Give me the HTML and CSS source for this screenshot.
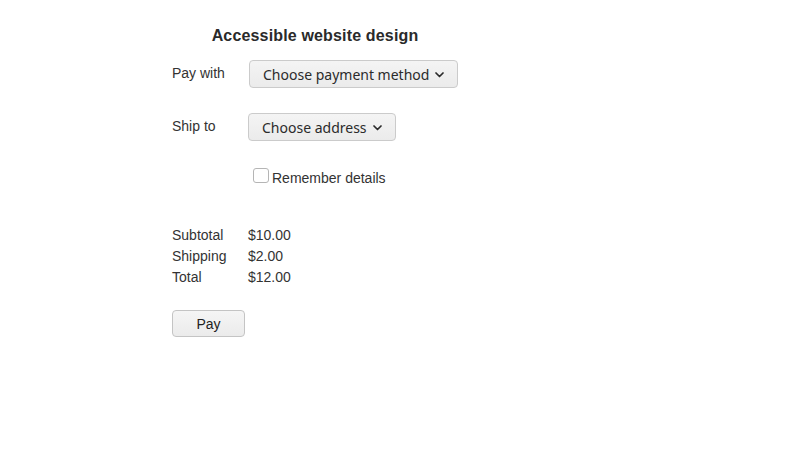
FILE: index.html
```html
<!DOCTYPE html>
<html lang="en">
<head>
<meta charset="utf-8">
<title>Accessible website design</title>
<link rel="stylesheet" href="styles.css">
</head>
<body>
<main class="page">
  <h1 class="title">Accessible website design</h1>
  <div class="row row-pay">
    <span class="label">Pay with</span>
    <button class="select" type="button">Choose payment method<svg class="chev" width="9" height="6" viewBox="0 0 9 6"><polyline points="1,1 4.5,4.5 8,1" fill="none" stroke="#2b2b2b" stroke-width="1.7" stroke-linecap="round" stroke-linejoin="round"/></svg></button>
  </div>
  <div class="row row-ship">
    <span class="label label-ship">Ship to</span>
    <button class="select" type="button">Choose address<svg class="chev" width="9" height="6" viewBox="0 0 9 6"><polyline points="1,1 4.5,4.5 8,1" fill="none" stroke="#2b2b2b" stroke-width="1.7" stroke-linecap="round" stroke-linejoin="round"/></svg></button>
  </div>
  <label class="remember"><span class="box"></span>Remember details</label>
  <div class="totals">
    <span>Subtotal</span><span>$10.00</span>
    <span>Shipping</span><span>$2.00</span>
    <span>Total</span><span>$12.00</span>
  </div>
  <button class="pay" type="button">Pay</button>
</main>
</body>
</html>
```
FILE: styles.css
```css
html, body {
  margin: 0;
  background: #ffffff;
}
body {
  font-family: "Liberation Sans", Arial, sans-serif;
  font-size: 14px;
  color: #333333;
}
.page {
  width: 286px;
  padding: 26px 0 0 172px;
}
.title {
  margin: 0;
  font-size: 16px;
  line-height: 19px;
  font-weight: bold;
  letter-spacing: 0.16px;
  text-align: center;
  color: #2a2a2a;
}
.row {
  display: flex;
  align-items: center;
  height: 28px;
}
.row-pay {
  margin-top: 15px;
}
.row-ship {
  margin-top: 25px;
}
.label {
  width: 77px;
  flex: none;
  margin-top: -3px;
}
.label-ship {
  width: 76px;
}
.select {
  display: flex;
  align-items: center;
  gap: 6px;
  height: 28px;
  box-sizing: border-box;
  padding: 0 13px 0 13px;
  border: 1px solid #cbcbcb;
  border-radius: 4px;
  background: linear-gradient(#f4f4f4, #ebebeb);
  font-family: "Noto Sans", "DejaVu Sans", sans-serif;
  font-size: 14px;
  color: #2b2b2b;
  white-space: nowrap;
}
.chev {
  margin-top: 1px;
}
.remember {
  display: flex;
  align-items: center;
  height: 18px;
  margin-top: 28px;
  padding-left: 81px;
  color: #333333;
}
.box {
  width: 14px;
  height: 13px;
  border: 1px solid #b5b5b5;
  border-radius: 3px;
  background: #ffffff;
  margin-right: 3px;
  align-self: flex-start;
  margin-top: -1px;
}
.totals {
  display: grid;
  grid-template-columns: 76px auto;
  grid-auto-rows: 21px;
  align-items: center;
  margin-top: 37px;
}
.pay {
  display: block;
  margin-top: 23px;
  width: 73px;
  height: 27px;
  border: 1px solid #c4c4c4;
  border-radius: 4px;
  background: linear-gradient(#f5f5f5, #ebebeb);
  font-family: "Liberation Sans", Arial, sans-serif;
  font-size: 14px;
  color: #222222;
  padding: 0;
}
```
